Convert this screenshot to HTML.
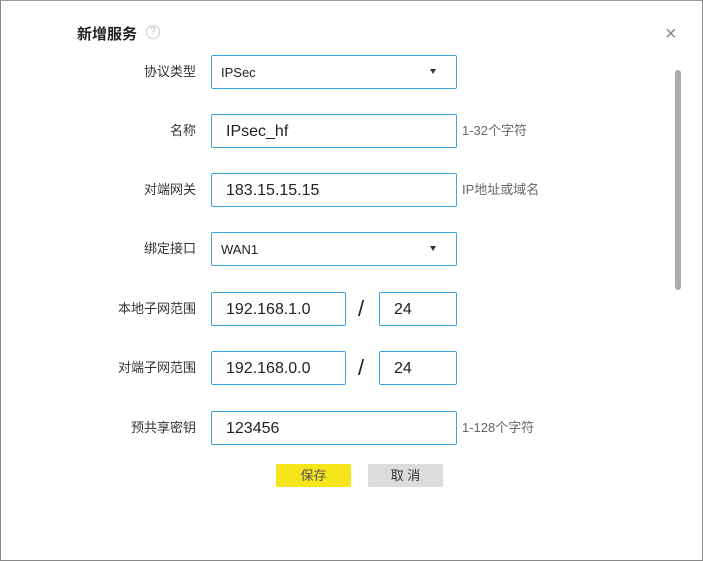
<!DOCTYPE html>
<html><head><meta charset="utf-8"><style>
*{margin:0;padding:0;box-sizing:border-box}
body{width:703px;height:561px;background:#fff;font-family:"Liberation Sans","Noto Sans CJK SC",sans-serif;position:relative;overflow:hidden}
.frame{position:absolute;left:0;top:0;width:703px;height:561px;border:1px solid #888;border-top-color:#999}
.t{position:absolute;left:77px;top:23px;font-size:15px;font-weight:bold;color:#222}
.q{position:absolute;left:146px;top:25px;width:14px;height:14px;border:1px solid #ccc;border-radius:50%;font-size:10px;color:#bbb;text-align:center;line-height:12px}
.x{position:absolute;left:665px;top:24px;font-size:20px;color:#888;line-height:20px}
.lb{position:absolute;right:507px;font-size:13px;color:#333;white-space:nowrap;margin-top:-2px}
.in{position:absolute;border:1px solid #3ba6dd;border-radius:2px;height:34px;font-size:16px;color:#222;padding-left:14px;line-height:33px}
.dd{font-size:13px;padding-left:9px}
.dd:after{content:"";position:absolute;right:20px;top:13px;border-left:3px solid transparent;border-right:3px solid transparent;border-top:5px solid #333}
.h{position:absolute;left:462px;font-size:13px;color:#666;margin-top:-2px}
.sl{position:absolute;left:358px;font-size:22px;color:#222}
.sb{position:absolute;left:675px;top:70px;width:6px;height:220px;background:#aaa;border-radius:3px}
.btn{position:absolute;top:464px;width:75px;height:23px;border-radius:2px;font-size:13px;text-align:center;line-height:23px}
</style></head><body>
<div class="frame"></div>
<div class="t">新增服务</div><div class="q">?</div>
<div class="x">×</div>
<div class="sb"></div>

<div class="lb" style="top:63px">协议类型</div>
<div class="in dd" style="left:211px;top:55px;width:246px">IPSec</div>

<div class="lb" style="top:122px">名称</div>
<div class="in" style="left:211px;top:114px;width:246px">IPsec_hf</div>
<div class="h" style="top:122px">1-32个字符</div>

<div class="lb" style="top:181px">对端网关</div>
<div class="in" style="left:211px;top:173px;width:246px">183.15.15.15</div>
<div class="h" style="top:181px">IP地址或域名</div>

<div class="lb" style="top:240px">绑定接口</div>
<div class="in dd" style="left:211px;top:232px;width:246px">WAN1</div>

<div class="lb" style="top:300px">本地子网范围</div>
<div class="in" style="left:211px;top:292px;width:135px">192.168.1.0</div>
<div class="sl" style="top:296px">/</div>
<div class="in" style="left:379px;top:292px;width:78px">24</div>

<div class="lb" style="top:359px">对端子网范围</div>
<div class="in" style="left:211px;top:351px;width:135px">192.168.0.0</div>
<div class="sl" style="top:355px">/</div>
<div class="in" style="left:379px;top:351px;width:78px">24</div>

<div class="lb" style="top:419px">预共享密钥</div>
<div class="in" style="left:211px;top:411px;width:246px">123456</div>
<div class="h" style="top:419px">1-128个字符</div>

<div class="btn" style="left:276px;background:#f7e51b;color:#555">保存</div>
<div class="btn" style="left:368px;background:#dcdcdc;color:#333">取 消</div>
</body></html>
